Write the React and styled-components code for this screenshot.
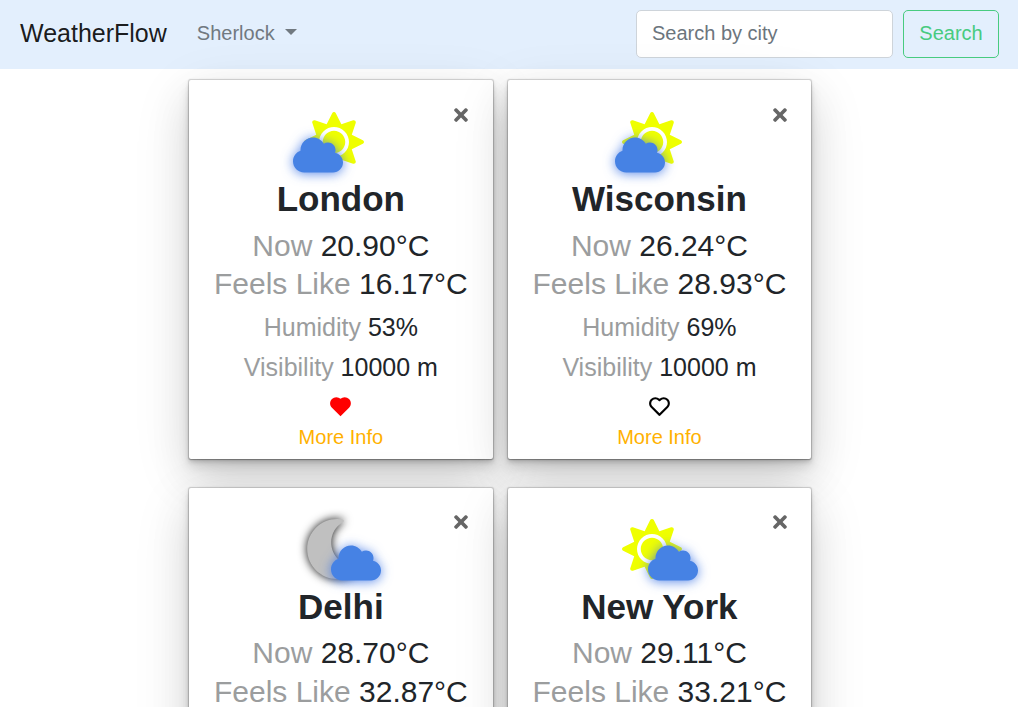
import React from "react";
import styled, { createGlobalStyle } from "styled-components";
import { FaSun, FaMoon, FaCloud, FaTimes } from "react-icons/fa";
import { BiHeart, BiSolidHeart } from "react-icons/bi";

const GlobalStyle = createGlobalStyle`
  *, *::before, *::after { box-sizing: border-box; }
  html, body { height: 100%; overflow: hidden; }
  body {
    margin: 0;
    background: #fff;
    color: #212529;
    font: 20px/1.5 "Liberation Sans", Arial, sans-serif;
  }
`;

const Navbar = styled.nav`
  display: flex;
  align-items: center;
  height: 69px;
  padding: 0 19px 1px 20px;
  background: #e3effd;
`;

const Brand = styled.a`
  font-size: 25px;
  line-height: 37.5px;
  color: rgba(0, 0, 0, 0.9);
  margin: -1px 30px 0 0;
`;

const Dropdown = styled.a`
  display: flex;
  align-items: center;
  margin: -2px auto 0 0;
  color: #717980;

  &::after {
    content: "";
    margin: -2px 0 0 10px;
    border-top: 6px solid;
    border-left: 6px solid transparent;
    border-right: 6px solid transparent;
  }
`;

const SearchForm = styled.form`
  display: flex;
  gap: 10px;
`;

const SearchInput = styled.input`
  width: 257px;
  height: 48px;
  padding: 0 15px 1px;
  border: 1px solid #ced4da;
  border-radius: 5px;
  background: #fff;
  font: inherit;

  &::placeholder { color: #6c757d; opacity: 1; }
`;

const SearchButton = styled.button`
  width: 96px;
  height: 48px;
  padding: 0 0 2px;
  border: 1px solid #48cb80;
  border-radius: 5px;
  background: transparent;
  color: #48cb80;
  font: inherit;
`;

const Grid = styled.main`
  display: grid;
  grid-template-columns: 303.7px 303.7px;
  column-gap: 14.9px;
  row-gap: 28.5px;
  justify-content: center;
  padding: 11px 0 0;
  margin-left: -17.7px;
`;

const Card = styled.article`
  position: relative;
  display: flex;
  flex-direction: column;
  align-items: center;
  height: 379px;
  padding-top: 31.6px;
  border-radius: 2px;
  background: #fff;
  box-shadow: 0 0 1px 0.5px rgba(0, 0, 0, 0.17), 0 1px 1px rgba(0, 0, 0, 0.2),
    0 3px 4px rgba(0, 0, 0, 0.15), 0 7px 12px rgba(0, 0, 0, 0.12),
    0 20px 40px rgba(0, 0, 0, 0.1), 0 16px 60px rgba(0, 0, 0, 0.11);
`;

const Close = styled.button`
  position: absolute;
  top: 24.6px;
  right: 21.7px;
  display: flex;
  padding: 0;
  border: 0;
  background: none;
  color: #666;
`;

const Sky = styled.div`
  position: relative;
  width: 60px;
  height: 60px;
  margin-right: 14px;
`;

const Sun = styled(FaSun)`
  display: block;
  font-size: 60px;
  color: #efff00;
`;

const Moon = styled(FaMoon)`
  display: block;
  font-size: 60px;
  color: silver;
  filter: drop-shadow(0 0 5px rgba(0, 0, 0, 0.95));
`;

const Cloud = styled(FaCloud)`
  position: absolute;
  top: 23.5px;
  left: ${(p) => p.$left}px;
  width: 50px;
  height: 40px;
  color: #4682e4;
  filter: drop-shadow(0 1px 6px rgba(60, 115, 228, 0.85));
`;

const City = styled.h3`
  margin: 6.6px 0 7.5px;
  font-size: 35px;
  line-height: 42px;
`;

const Reading = styled.p`
  margin: 0 0 ${(p) => (p.$small ? 10 : 2.5)}px;
  font-size: ${(p) => (p.$small ? 25 : 30)}px;
  line-height: 1.2;
`;

const SmallReadings = styled.div`
  padding-top: 7.3px;
`;

const Label = styled.span`
  color: #9b9d9e;
`;

const Favourite = styled.button`
  display: flex;
  margin-top: 2px;
  padding: 0;
  border: 0;
  background: none;
  color: ${(p) => (p.$active ? "red" : "#000")};
`;

const MoreInfo = styled.a`
  margin-top: 3px;
  color: #ffb100;
`;

const cards = [
  { city: "London", now: "20.90", feels: "16.17", humidity: 53, body: "sun", left: -10.5, favourite: true },
  { city: "Wisconsin", now: "26.24", feels: "28.93", humidity: 69, body: "sun", left: -7.9 },
  { city: "Delhi", now: "28.70", feels: "32.87", humidity: 66, body: "moon", left: 27.4 },
  { city: "New York", now: "29.11", feels: "33.21", humidity: 62, body: "sun", left: 25.4 },
];

function WeatherCard({ city, now, feels, humidity, body, left, favourite }) {
  return (
    <Card>
      <Close aria-label="Remove"><FaTimes size={20} /></Close>
      <Sky>
        {body === "moon" ? <Moon /> : <Sun />}
        <Cloud $left={left} />
      </Sky>
      <City>{city}</City>
      <Reading><Label>Now</Label> {now}°C</Reading>
      <Reading><Label>Feels Like</Label> {feels}°C</Reading>
      <SmallReadings>
        <Reading $small><Label>Humidity</Label> {humidity}%</Reading>
      </SmallReadings>
      <Reading $small><Label>Visibility</Label> 10000 m</Reading>
      <Favourite $active={favourite} aria-label="Favourite">
        {favourite ? <BiSolidHeart size={25} /> : <BiHeart size={25} />}
      </Favourite>
      <MoreInfo>More Info</MoreInfo>
    </Card>
  );
}

export default function App() {
  return (
    <>
      <GlobalStyle />
      <Navbar>
        <Brand>WeatherFlow</Brand>
        <Dropdown>Sherlock</Dropdown>
        <SearchForm>
          <SearchInput placeholder="Search by city" />
          <SearchButton type="button">Search</SearchButton>
        </SearchForm>
      </Navbar>
      <Grid>
        {cards.map((card) => <WeatherCard key={card.city} {...card} />)}
      </Grid>
    </>
  );
}
